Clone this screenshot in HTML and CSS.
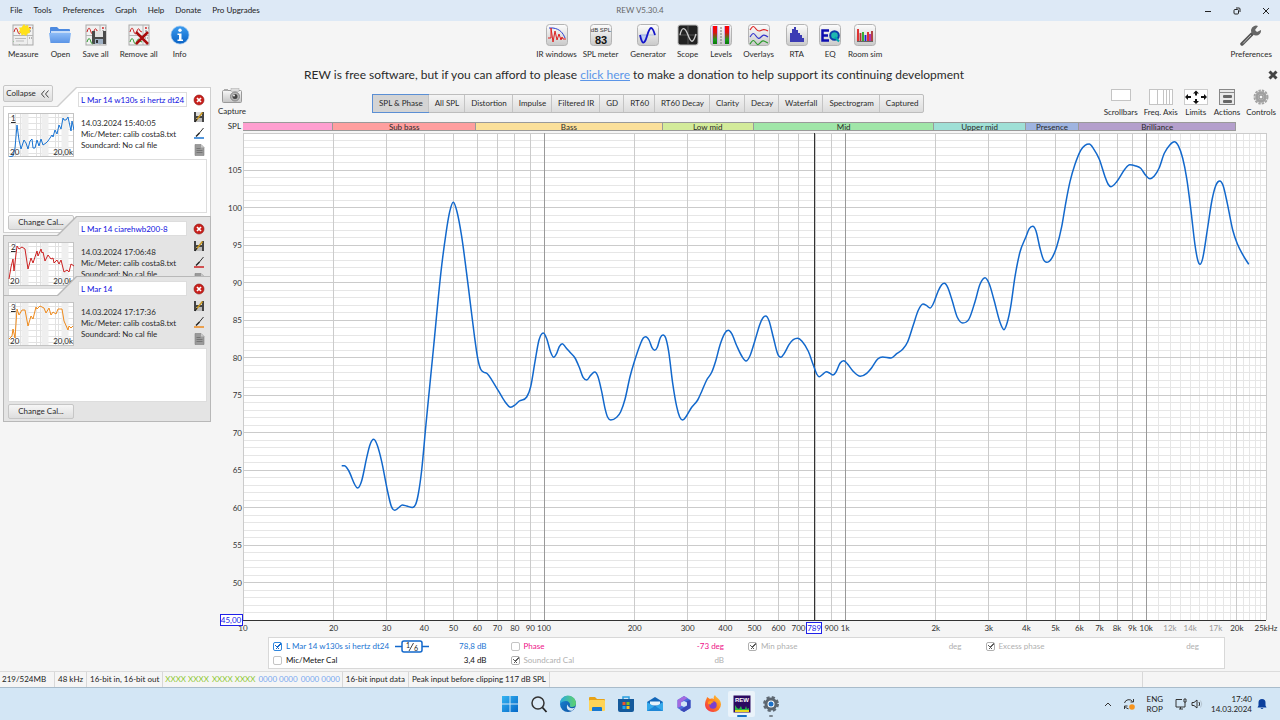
FILE: index.html
```html
<!DOCTYPE html>
<html lang="en">
<head>
<meta charset="utf-8">
<title>REW V5.30.4</title>
<link rel="stylesheet" href="styles.css">
</head>
<body>
<svg class="defs" aria-hidden="true">
  <defs>
    <linearGradient id="g-tile" x1="0" y1="0" x2="0" y2="1"><stop offset="0" stop-color="#fdfdfd"/><stop offset="1" stop-color="#c9c9c9"/></linearGradient>
    <linearGradient id="g-folder" x1="0" y1="0" x2="0" y2="1"><stop offset="0" stop-color="#8dbcf7"/><stop offset="1" stop-color="#5a94e6"/></linearGradient>
    <linearGradient id="g-info" x1="0" y1="0" x2="0" y2="1"><stop offset="0" stop-color="#3b9cf0"/><stop offset="1" stop-color="#0a62c4"/></linearGradient>
    <linearGradient id="g-level" x1="0" y1="0" x2="0" y2="1"><stop offset="0" stop-color="#f00"/><stop offset=".35" stop-color="#e01010"/><stop offset=".75" stop-color="#1a9a1a"/><stop offset="1" stop-color="#0a7a0a"/></linearGradient>
    <linearGradient id="g-edge" x1="0" y1="0" x2="1" y2="1"><stop offset="0" stop-color="#1b87d6"/><stop offset="1" stop-color="#0b4fa0"/></linearGradient>
    <linearGradient id="g-edge2" x1="0" y1="0" x2="1" y2="0"><stop offset="0" stop-color="#2ba9e0"/><stop offset="1" stop-color="#5fd36a"/></linearGradient>
    <linearGradient id="g-win" x1="0" y1="0" x2="1" y2="1"><stop offset="0" stop-color="#35b4f2"/><stop offset="1" stop-color="#0568c8"/></linearGradient>
    <linearGradient id="g-fox" x1="1" y1="0" x2="0" y2="1"><stop offset="0" stop-color="#ffd43a"/><stop offset=".5" stop-color="#ff7a1c"/><stop offset="1" stop-color="#f0235a"/></linearGradient>
    <linearGradient id="g-cam" x1="0" y1="0" x2="0" y2="1"><stop offset="0" stop-color="#f8f8f8"/><stop offset="1" stop-color="#c4c4c4"/></linearGradient>
    <symbol id="doc" viewBox="0 0 22 22">
      <rect x="1" y="1" width="20" height="20" fill="#f1f1f1" stroke="#a9a9a9"/>
      <path d="M1 11.500h20M15 1v20" stroke="#b5b5b5"/>
      <path d="M2 8c2-7 3-3 4 0s2 2 3-1 2-3 3 0l2 1" fill="none" stroke="#c22"/>
      <path d="M2 18c2-6 3-3 4 0s2 2 3-1 2-2 3 0l2 1" fill="none" stroke="#2a9a2a"/>
      <path d="M17 4h1M20 4h1M17 7h2M17 14h1M19 14h1" stroke="#777"/><circle cx="18" cy="4" r="1" fill="#d33"/>
    </symbol>
    <symbol id="tile" viewBox="0 0 22 22"><rect x=".5" y=".5" width="21" height="21" rx="3" fill="url(#g-tile)" stroke="#b4b4b4"/></symbol>
    <symbol id="remove" viewBox="0 0 12 12"><circle cx="6" cy="6" r="5" fill="#c9201c" stroke="#8f1512" stroke-width=".6"/><path d="M4 4l4 4M8 4l-4 4" stroke="#fff" stroke-width="1.700"/></symbol>
    <symbol id="save" viewBox="0 0 12 12"><path d="M1 1h2v4h6V1h2v10H1z" fill="#444"/><rect x="3" y="1" width="6" height="4" fill="#ddd"/><rect x="3" y="7" width="6" height="4" fill="#bbb"/><path d="M3 9.500l6.500-8" stroke="#c9981f" stroke-width="1.500"/><path d="M2 11l2-3" stroke="#222" stroke-width="1.200"/></symbol>
    <symbol id="note" viewBox="0 0 12 12"><path d="M2 .5h6l3 3v8H2z" fill="#9a9a9a" stroke="#808080" stroke-width=".6"/><path d="M3.500 4.500h4M3.500 6.500h6M3.500 8.500h6" stroke="#6c6c6c" stroke-width=".8"/><path d="M8 .5v3h3z" fill="#c9c9c9"/></symbol>
    <symbol id="pen" viewBox="0 0 12 12"><path d="M10.500 1L6 6.500" stroke="#333" stroke-width="1"/><path d="M6.500 6L3 9.500" stroke="#222" stroke-width="1.500"/><path d="M1 11h10" stroke="currentColor" stroke-width="1.500"/></symbol>
    <symbol id="mini-grid" viewBox="0 0 66 44">
      <rect x=".5" y=".5" width="65" height="43" fill="#fff" stroke="#c4c4c4"/>
      <path d="M1 4.500h64M1 10.500h64M1 16.500h64M1 22.500h64M1 28.500h64M1 34.500h64M1 40.500h64M7.500 1v42M12.500 1v42M28.500 1v42M32.500 1v42M47.500 1v42M50.500 1v42" stroke="#e2e2e2" fill="none"/>
      <path d="M17 1v42M37 1v42M57 1v42" stroke="#efefef" stroke-width="7"/>
    </symbol>
    <symbol id="chevrons" viewBox="0 0 10 10"><path d="M4.500 1.500L1.500 5l3 3.500M8.500 1.500L5.500 5l3 3.500" fill="none" stroke="#444"/></symbol>
  </defs>
</svg>

<header class="titlebar">
  <nav class="menu">
    <button>File</button><button>Tools</button><button>Preferences</button><button>Graph</button><button>Help</button><button>Donate</button><button>Pro Upgrades</button>
  </nav>
  <h1 class="title">REW V5.30.4</h1>
  <div class="controls">
    <button aria-label="Minimise"><svg viewBox="0 0 8 8"><path d="M1 4.500h6"/></svg></button>
    <button aria-label="Restore"><svg viewBox="0 0 8 8"><rect x="1" y="2.500" width="4.500" height="4.500" rx="1"/><path d="M3 1h3q1 0 1 1v3"/></svg></button>
    <button aria-label="Close"><svg viewBox="0 0 8 8"><path d="M1 1l6 6M7 1L1 7"/></svg></button>
  </div>
</header>

<div class="toolbar">
  <div class="tools tools-file">
    <button><svg viewBox="0 0 22 22"><use href="#doc"/><rect x="2" y="12" width="13" height="8" fill="#eee"/><path d="M3 14.500h11M4 17h8" stroke="#bbb"/><path d="M12 0l1.500 2 2.500-1 .5 2.500L19 4.500 17.500 6.500 18 9l-2.500.5L14 12l-2-1.500-2.500 1L9 9 6.500 8 8 6 7 3.500 9.500 3.500z" fill="#ffe11a"/></svg>Measure</button>
    <button><svg viewBox="0 0 22 22"><path d="M1 4q0-1 1-1h6l2 2h10q1 0 1 1v8H1z" fill="#4d8ae0"/><path d="M2 7h19v4H2z" fill="#c6dcf8"/><path d="M0 9h22l-1.500 10H1.500z" fill="url(#g-folder)"/></svg>Open</button>
    <button><svg viewBox="0 0 22 22"><use href="#doc"/><path d="M7 7h14v13H8l-1-1z" fill="#4a4a4a"/><rect x="10" y="7" width="8" height="6" fill="#e3e3e3"/><rect x="10" y="15" width="8" height="5" fill="#9fb0c4"/><rect x="11" y="16" width="2" height="3" fill="#333"/></svg>Save all</button>
    <button><svg viewBox="0 0 22 22"><use href="#doc"/><path d="M8 8l12 12M20 8L8 20" stroke="#a80d0d" stroke-width="2.500"/></svg>Remove all</button>
    <button><svg viewBox="0 0 22 22"><circle cx="11" cy="11" r="9" fill="url(#g-info)" stroke="#9cc4ee" stroke-width=".7"/><circle cx="11" cy="6.300" r="1.700" fill="#fff"/><path d="M8.500 9.500H12.500V15.500H14V17H8.500V15.500H10V11H8.500z" fill="#fff"/></svg>Info</button>
  </div>
  <div class="tools tools-windows">
    <button><svg viewBox="0 0 22 22"><use href="#tile"/><path d="M3 4h4c7 1 10 5 12 10" fill="none" stroke="#2a3fd0"/><path d="M2 14h3V4l2 14 2-11 2 9 2-6 2 6 1-3 1 2h3" fill="none" stroke="#d22"/></svg>IR windows</button>
    <button><svg viewBox="0 0 22 22"><use href="#tile"/><text x="11" y="8" class="i-db">dB SPL</text><text x="11" y="20" class="i-83">83</text></svg>SPL meter</button>
    <button><svg viewBox="0 0 22 22"><use href="#tile"/><path d="M3 11h16M4 11q3 14 6 3l1-3z" fill="#bfcdf0" stroke="#9fb2e6" stroke-width=".7"/><path d="M3 11c2 9 4 11 7 1s5-11 8-1" fill="none" stroke="#1414c8" stroke-width="1.800"/></svg>Generator</button>
    <button><svg viewBox="0 0 22 22"><rect x=".5" y=".5" width="21" height="21" rx="3" fill="#bbb"/><rect x="1.500" y="1.500" width="19" height="19" rx="2" fill="#222"/><path d="M2 11h18M11 2v18" stroke="#555"/><path d="M3 11c2-9 5-8 8 0s5 9 8-1" fill="none" stroke="#ccc" stroke-width="1.300"/></svg>Scope</button>
    <button><svg viewBox="0 0 22 22"><use href="#tile"/><path d="M3 2h4v18H3zM15 2h4v18h-4z" fill="url(#g-level)"/><path d="M2.500 2v18M7.500 2v18M14.500 2v18M19.500 2v18" stroke="#c9a6e6"/><path d="M10 4h2M10 7h2M10 10h2M10 13h2M10 16h2M10 19h2" stroke="#777"/></svg>Levels</button>
    <button><svg viewBox="0 0 22 22"><use href="#tile"/><g fill="none" stroke-width="1.200"><path d="M2 6c3-5 4-4 6-1s4 2 6 1 3-1 6 1" stroke="#d22"/><path d="M2 13c3-5 4-4 6-1s3 3 5 1 3-3 7 0" stroke="#33c"/><path d="M2 20c3-5 4-4 6-1s3 1 5-1 3-1 7 1" stroke="#2a9a2a"/></g></svg>Overlays</button>
    <button><svg viewBox="0 0 22 22"><use href="#tile"/><path d="M4 18V9h2V5h2V3h2v3h2v3h2v2h2v3h2v4z" fill="#3c3cb4"/></svg>RTA</button>
    <button><svg viewBox="0 0 22 22"><use href="#tile"/><path d="M10 6.500H3.500v10H10M3 11.500h6" fill="none" stroke="#0c0cb0" stroke-width="2.500"/><circle cx="15.500" cy="11.500" r="4.300" fill="#1fb8b0" stroke="#0c3ca8" stroke-width="2"/><path d="M16 13l4 4.500" stroke="#0aa" stroke-width="2"/></svg>EQ</button>
    <button><svg viewBox="0 0 22 22"><use href="#tile"/><path d="M4 17V5M14 17V8" stroke="#d22" stroke-width="1.800"/><path d="M6.500 17V9M18 17V7" stroke="#a33" stroke-width="1.800"/><path d="M9 17V8" stroke="#2a2" stroke-width="1.800"/><path d="M11.500 17V11" stroke="#22c" stroke-width="1.800"/><path d="M16 17V10" stroke="#a2a" stroke-width="1.800"/><path d="M3 17.500h16" stroke="#666"/></svg>Room sim</button>
  </div>
  <div class="tools">
    <button><svg viewBox="0 0 22 22"><path d="M2 20l10-10" stroke="#555" stroke-width="3.500" stroke-linecap="round"/><path d="M3 19.500l8-8.500" stroke="#bbb" stroke-width="1"/><path d="M18 2a5 5 0 1 0 3 4l-4 2-2-2z" fill="#666"/></svg>Preferences</button>
  </div>
</div>

<div class="notice">
  <p>REW is free software, but if you can afford to please <a href="#">click here</a> to make a donation to help support its continuing development</p>
  <button class="dismiss" aria-label="Dismiss"><svg viewBox="0 0 10 10"><path d="M1.500 1.500l7 7M8.500 1.500l-7 7" stroke="#444" stroke-width="3"/></svg></button>
</div>

<main class="workspace">
  <aside class="sidebar">
    <button class="collapse">Collapse <svg viewBox="0 0 10 10"><use href="#chevrons"/></svg></button>

    <section class="panel selected blue">
      <div class="panel-top">
        <div class="thumb"><svg viewBox="0 0 66 44"><use href="#mini-grid"/><polyline points="1,44 5,43 7,35 9,12 11,27 13,36 16,27 18,30 20,36 22,28 24,26 25,35 27,35 29,27 31,33 33,26 35,32 38,30 40,28 44,22 45,24 47,17 49,21 51,12 53,16 55,5 56,7 58,7 60,4 63,18 64,8 66,17"/></svg><b>1</b><i>20</i><i class="hi">20,0k</i></div>
        <div class="info"><input type="text" aria-label="Measurement 1 name" value="L Mar 14 w130s si hertz dt24"><p>14.03.2024 15:40:05<br>Mic/Meter: calib costa8.txt<br>Soundcard: No cal file</p></div>
        <div class="acts"><button aria-label="Remove"><svg><use href="#remove"/></svg></button><button aria-label="Save"><svg><use href="#save"/></svg></button><button aria-label="Trace colour"><svg><use href="#pen"/></svg></button><button aria-label="Notes"><svg><use href="#note"/></svg></button></div>
      </div>
      <textarea aria-label="Comments for measurement 1"></textarea>
      <button class="cal">Change Cal...</button>
    </section>

    <section class="panel second red">
      <div class="panel-top">
        <div class="thumb"><svg viewBox="0 0 66 44"><use href="#mini-grid"/><polyline points="1,37 3,25 5,17 6,29 9,4 11,7 14,5 17,7 20,27 23,16 25,21 29,9 30,14 33,7 34,11 35,10 37,19 40,13 43,17 45,16 46,21 49,18 51,22 53,18 56,30 59,28 61,30 63,22 66,24"/></svg><b>2</b><i>20</i><i class="hi">20,0k</i></div>
        <div class="info"><input type="text" aria-label="Measurement 2 name" value="L Mar 14 ciarehwb200-8"><p>14.03.2024 17:06:48<br>Mic/Meter: calib costa8.txt<br>Soundcard: No cal file</p></div>
        <div class="acts"><button aria-label="Remove"><svg><use href="#remove"/></svg></button><button aria-label="Save"><svg><use href="#save"/></svg></button><button aria-label="Trace colour"><svg><use href="#pen"/></svg></button><button aria-label="Notes"><svg><use href="#note"/></svg></button></div>
      </div>
      <textarea aria-label="Comments for measurement 2"></textarea>
    </section>

    <section class="panel third orange">
      <div class="panel-top">
        <div class="thumb"><svg viewBox="0 0 66 44"><use href="#mini-grid"/><polyline points="1,37 4,34 5,27 7,36 9,7 11,13 14,8 17,8 20,24 23,14 25,17 28,5 29,7 32,4 36,6 38,11 41,6 43,13 45,10 48,12 50,7 54,7 56,19 60,28 61,24 63,26 65,24"/></svg><b>3</b><i>20</i><i class="hi">20,0k</i></div>
        <div class="info"><input type="text" aria-label="Measurement 3 name" value="L Mar 14"><p>14.03.2024 17:17:36<br>Mic/Meter: calib costa8.txt<br>Soundcard: No cal file</p></div>
        <div class="acts"><button aria-label="Remove"><svg><use href="#remove"/></svg></button><button aria-label="Save"><svg><use href="#save"/></svg></button><button aria-label="Trace colour"><svg><use href="#pen"/></svg></button><button aria-label="Notes"><svg><use href="#note"/></svg></button></div>
      </div>
      <textarea aria-label="Comments for measurement 3"></textarea>
      <button class="cal">Change Cal...</button>
    </section>
  </aside>

  <section class="graph">
    <div class="graph-bar">
      <button class="capture"><svg viewBox="0 0 20 16"><rect x=".5" y="2.500" width="19" height="12" rx="1" fill="url(#g-cam)" stroke="#999"/><rect x="2" y="1" width="4" height="2" fill="#aaa"/><rect x="9" y="0.500" width="8" height="3" fill="#ddd" stroke="#aaa" stroke-width=".5"/><circle cx="13" cy="8.500" r="4.500" fill="#b4b4b4" stroke="#888"/><circle cx="13" cy="8.500" r="2.500" fill="#444"/><circle cx="12" cy="7.500" r="1" fill="#eee"/></svg>Capture</button>
      <div class="tabs">
        <button class="on">SPL &amp; Phase</button><button>All SPL</button><button>Distortion</button><button>Impulse</button><button>Filtered IR</button><button>GD</button><button>RT60</button><button>RT60 Decay</button><button>Clarity</button><button>Decay</button><button>Waterfall</button><button>Spectrogram</button><button>Captured</button>
      </div>
      <div class="view">
        <button><svg viewBox="0 0 24 18"><rect x="2.500" y="1.500" width="19" height="11" fill="#fff" stroke="#c4c4c4"/></svg>Scrollbars</button>
        <button><svg viewBox="0 0 24 18"><rect x=".5" y="1.500" width="23" height="15" fill="#fff" stroke="#c4c4c4"/><path d="M8.500 1v16M14.500 1v16M17.500 1v16M20.500 1v16" stroke="#c4c4c4"/></svg>Freq. Axis</button>
        <button><svg viewBox="0 0 24 18"><rect x=".5" y="1.500" width="23" height="15" fill="#fff" stroke="#ccc"/><path d="M12 2.500l3 3h-2v2h-2v-2H9zM12 16l3-3h-2v-2h-2v2H9zM1 9l3-3v2h3v2H4v2zM23 9l-3-3v2h-3v2h3v2z" fill="#111"/></svg>Limits</button>
        <button><svg viewBox="0 0 24 18"><rect x="4.500" y="1.500" width="15" height="15" fill="#e9e9e9" stroke="#888"/><path d="M4.500 4.500h15" stroke="#888"/><rect x="8" y="7" width="9" height="3" rx="1" fill="#666"/><rect x="8" y="12" width="9" height="3" rx="1" fill="#666"/></svg>Actions</button>
        <button><svg viewBox="0 0 24 18"><circle cx="12" cy="9" r="6.500" fill="none" stroke="#a4a4a4" stroke-width="2" stroke-dasharray="2.400 1.010"/><circle cx="12" cy="9" r="4.200" fill="#ccc" stroke="#a0a0a0" stroke-width="3"/><circle cx="12" cy="9" r="2" fill="#f5f5f5" stroke="#888"/></svg>Controls</button>
      </div>
    </div>

    <div class="chart">
      <span class="unit">SPL</span>
      <div class="bands"><span class="b0"></span><span class="b1">Sub bass</span><span class="b2">Bass</span><span class="b3">Low mid</span><span class="b4">Mid</span><span class="b5">Upper mid</span><span class="b6">Presence</span><span class="b7">Brilliance</span></div>
      <svg class="plot" role="img" aria-label="SPL against frequency">
        <g id="grid"></g>
        <svg viewBox="243 133 1023 487" preserveAspectRatio="none" width="100%" height="100%"><path id="trace" class="trace"/></svg>
        <g id="axis"></g>
      </svg>
    </div>

    <div class="legend">
      <label class="entry c-blue"><input type="checkbox" checked><span>L Mar 14 w130s si hertz dt24</span><svg class="smooth" viewBox="0 0 34 13"><path d="M0 6.500h34" stroke="#1268cc" stroke-width="1.500"/><rect x="7" y="1" width="20" height="11" rx="2" fill="#fff" stroke="#1268cc" stroke-width="1.500"/><text x="11" y="8">1</text><text x="19" y="11">6</text><path d="M14 11l4.500-8" stroke="#444"/></svg><output>78,8 dB</output></label>
      <label class="entry c-pink"><input type="checkbox"><span>Phase</span><output>-73 deg</output></label>
      <label class="entry c-off"><input type="checkbox" checked disabled><span>Min phase</span><output>deg</output></label>
      <label class="entry c-off"><input type="checkbox" checked disabled><span>Excess phase</span><output>deg</output></label>
      <label class="entry"><input type="checkbox"><span>Mic/Meter Cal</span><output>3,4 dB</output></label>
      <label class="entry c-off"><input type="checkbox" checked disabled><span>Soundcard Cal</span><output>dB</output></label>
    </div>
  </section>
</main>

<footer class="status">
  <span class="mem">219/524MB</span><span>48 kHz</span><span>16-bit in, 16-bit out</span><span class="bits"><em>XXXX XXXX</em><em>XXXX XXXX</em><strong>0000 0000</strong><strong>0000 0000</strong></span><span>16-bit input data</span><span>Peak input before clipping 117 dB SPL</span><span class="fill"></span><span class="tail"></span>
</footer>

<nav class="taskbar">
  <div class="apps">
    <button aria-label="Start"><svg viewBox="0 0 18 18"><path d="M1 1h7.500v7.500H1zM9.500 1H17v7.500H9.500zM1 9.500h7.500V17H1zM9.500 9.500H17V17H9.500z" fill="url(#g-win)"/></svg></button>
    <button aria-label="Search"><svg viewBox="0 0 18 18"><circle cx="8" cy="8" r="6" fill="#dbeaf6" stroke="#333" stroke-width="1.500"/><path d="M12.500 12.500L16.500 17" stroke="#222" stroke-width="1.800"/></svg></button>
    <button aria-label="Edge"><svg viewBox="0 0 18 18"><circle cx="9" cy="9" r="8" fill="url(#g-edge)"/><path d="M1 9a8 8 0 0 1 16-1c0 3-2 4-4 4-3 0-2-1-2-2.500S9.500 6 7 6 2 7 1 9z" fill="url(#g-edge2)"/><path d="M16 12.500c-3 1.500-7 .5-7.500-3-2 4 1 7 5 6z" fill="#d3e6f5"/></svg></button>
    <button aria-label="File Explorer"><svg viewBox="0 0 18 18"><path d="M1 3q0-1 1-1h5l2 2h7q1 0 1 1v4H1z" fill="#e8a317"/><rect x="1" y="5" width="16" height="11" rx="1" fill="#ffd457"/><path d="M4 16v-3q0-1 1-1h8q1 0 1 1v3z" fill="#1878d0"/></svg></button>
    <button aria-label="Store"><svg viewBox="0 0 18 18"><path d="M6 5V2h6v3" fill="none" stroke="#2a9fe0" stroke-width="1.500"/><path d="M1 4h16v11q0 2-2 2H3q-2 0-2-2z" fill="#145a9c"/><path d="M5.500 7h3v3h-3z" fill="#f0532a"/><path d="M9.500 7h3v3h-3z" fill="#80c020"/><path d="M5.500 11h3v3h-3z" fill="#20a8f0"/><path d="M9.500 11h3v3h-3z" fill="#ffc020"/></svg></button>
    <button aria-label="Mail"><svg viewBox="0 0 18 18"><path d="M1 7l8-5 8 5v9H1z" fill="#1266b8"/><path d="M4 6.500h10v4H4z" fill="#e6f2fb"/><path d="M1 7l8 5 8-5v9H1z" fill="#35a8ea"/><path d="M1 16l8-5 8 5z" fill="#1e86d6"/></svg></button>
    <button aria-label="Microsoft 365"><svg viewBox="0 0 18 18"><path d="M9 1l6.500 4v8L9 17l-6.500-4V5z" fill="#4b6fdc"/><path d="M9 1L2.500 5v8l4-2V7l6-4z" fill="#a46be0"/><path d="M15.500 5v8L9 17l-4-2 6.500-4V6z" fill="#3b49b8"/><path d="M9 6l3 1.500v3L9 12l-3-1.500v-3z" fill="#d3e6f5"/></svg></button>
    <button aria-label="Firefox"><svg viewBox="0 0 18 18"><path d="M2 5c1-2 1-3 1-3l3 2c2-1 4 0 4 0-1-2 1-4 1-4 1 3 6 4 6 9.500A7.700 7.700 0 0 1 9 17C4 17 1 13 1 9.500 1 7 2 5 2 5z" fill="url(#g-fox)"/><circle cx="9" cy="10" r="3.700" fill="#7a3fd0"/><path d="M4 7c2-2 4-1 6 0-2 1-3 1-3 2.500L4 9z" fill="#ff9a1c"/></svg></button>
    <button class="active" aria-label="REW"><svg viewBox="0 0 18 18"><rect x=".5" y=".5" width="17" height="17" fill="#2c0a60"/><text x="9" y="7" class="i-rew">REW</text><path d="M2 17V10l2 3 2 1 2-3 1 3h3l1-3 1 3 2-1v4z" fill="#28b848"/><path d="M2 17v-2h14v2z" fill="#e8d820"/></svg></button>
    <button class="running" aria-label="Settings"><svg viewBox="0 0 18 18"><circle cx="9" cy="9" r="6.500" fill="none" stroke="#606a74" stroke-width="3" stroke-dasharray="3 2.100"/><circle cx="9" cy="9" r="5" fill="#fff" stroke="#5c666f" stroke-width="3"/><circle cx="9" cy="9" r="2.500" fill="#1a70c8"/></svg></button>
  </div>
  <div class="tray">
    <button aria-label="Hidden icons"><svg viewBox="0 0 12 12"><path d="M3 8l3-3 3 3"/></svg></button>
    <button aria-label="Update"><svg viewBox="0 0 12 12"><path d="M1.500 5a4.500 4.500 0 0 1 8-1.500M10.500 1v3h-3M1.500 11V8h3M2 8.500q1 2 3.500 2.300"/><circle cx="9" cy="9" r="2.800" fill="#f7941d" stroke="none"/></svg></button>
    <span class="lang">ENG<br>ROP</span>
    <button class="net" aria-label="Network"><svg viewBox="0 0 12 12"><path d="M7 1.500H1v7.500h9V6M4 11h4M5.500 9v2M9 1h2v3H9zM10 4v2"/></svg></button>
    <button aria-label="Volume"><svg viewBox="0 0 12 12"><path d="M1 4.500h2L6 2v8L3 7.500H1zM8 4q1.300 2 0 4"/><path d="M9.500 2.500q2.500 3.500 0 7" stroke="#b5c4d0"/></svg></button>
    <time>17:40<br>14.03.2024</time>
    <button class="bell" aria-label="Notifications"><svg viewBox="0 0 12 12"><path d="M6 1a3.500 3.500 0 0 1 3.500 3.500V7.500l1 2h-9l1-2V4.500A3.500 3.500 0 0 1 6 1zM4.500 10h3q-1.500 2-3 0z" fill="#0b3f9c" stroke="none"/></svg></button>
  </div>
</nav>
<script src="chart.js"></script>
</body>
</html>
```
FILE: styles.css
```css
* { box-sizing: border-box; }
body {
  margin: 0;
  min-height: 100vh;
  display: flex;
  flex-direction: column;
  background: #f5f5f5;
  color: #2a2a2a;
  font: 8px/11px Lato, "Open Sans", sans-serif;
}
button, input, textarea { font: inherit; color: inherit; margin: 0; }
button { background: none; border: 0; padding: 0; white-space: nowrap; }
p { margin: 0; }
svg { display: block; flex: none; }
.defs { position: absolute; width: 0; height: 0; }

.titlebar {
  display: grid;
  grid-template-columns: 1fr auto 1fr;
  align-items: center;
  height: 21px;
  padding: 0 10px;
  background: #dde9f6;
}
.menu { display: flex; gap: 11px; color: #222; }
.title { margin: 0; font-size: 8px; font-weight: 400; color: #666; }
.controls { display: flex; justify-content: flex-end; gap: 21px; }
.controls svg { width: 8px; height: 8px; fill: none; stroke: #222; }

.toolbar {
  display: flex;
  justify-content: space-between;
  height: 41px;
  padding: 3px 8px 0 8px;
}
.tools { display: flex; gap: 11px; }
.tools button { display: flex; flex-direction: column; align-items: center; gap: 3px; }
.tools svg { width: 22px; height: 22px; }
.tools-windows {
  display: grid;
  gap: 0;
  grid-template-columns: 44px 44px 51px 28px 39px 36px 40px 27px 43px;
}
.i-db { font: 6px "Liberation Sans", sans-serif; text-anchor: middle; fill: #333; }
.i-83 { font: bold 11px "Liberation Sans", sans-serif; text-anchor: middle; fill: #111; }

.notice { display: flex; align-items: center; height: 25px; padding: 0 2px 0 0; }
.notice p { flex: 1; text-align: center; font-size: 12px; line-height: 16px; }
.notice a { color: #5b95e8; }
.dismiss svg { width: 10px; height: 10px; }

.workspace { flex: 1; display: grid; grid-template-columns: 208px 1fr; padding-left: 3px; }

.sidebar { display: flex; flex-direction: column; align-items: stretch; margin-top: -2px; }
.collapse, .cal {
  display: flex;
  align-items: center;
  justify-content: center;
  gap: 4px;
  border: 1px solid #c6c6c6;
  border-radius: 2px;
  background: linear-gradient(#f6f6f6, #dedede);
}
.collapse { align-self: flex-start; width: 50px; height: 17px; }
.collapse svg { width: 10px; height: 10px; }

.panel {
  --edge: #b8b8b8;
  --face: #e4e4e4;
  position: relative;
  display: flex;
  flex-direction: column;
  gap: 2px;
  height: 146px;
  padding: 5px 4px 3px 5px;
  background: var(--edge);
  clip-path: polygon(0 19px, 54px 19px, 73px 0, 100% 0, 100% 100%, 0 100%);
}
.panel::before {
  content: "";
  position: absolute;
  inset: 1px;
  background: var(--face);
  clip-path: polygon(0 19px, 54px 19px, 73px 0, 100% 0, 100% 100%, 0 100%);
}
.panel > * { position: relative; }
.selected { --edge: #cfcfcf; --face: #fff; margin-top: -15px; }
.second { margin-top: -17px; }
.third { margin-top: -86px; }
.blue { --trace: #1a74d2; }
.red { --trace: #cc2222; }
.orange { --trace: #ee8a1c; }
.panel-top { display: grid; grid-template-columns: 66px 109px 1fr; gap: 4px; height: 65px; }
.thumb { align-self: end; display: grid; grid-template-columns: 1fr auto; align-content: space-between; height: 44px; padding: 0 1px 0 2px; position: relative; line-height: 9px; }
.thumb svg { position: absolute; inset: 0; width: 66px; height: 44px; }
.thumb polyline { fill: none; stroke: var(--trace); stroke-width: 1; }
.thumb b, .thumb i { position: relative; font-weight: 400; font-style: normal; }
.thumb b { grid-column: 1 / 3; text-decoration: underline; margin: 1px 0 0 1px; }
.info input { display: block; width: 100%; height: 15px; padding: 0 0 0 2px; border: 1px solid #ddd; background: #fff; color: #1010e0; }
.info p { padding: 11px 0 0 3px; white-space: nowrap; }
.acts { display: flex; flex-direction: column; align-items: center; justify-content: space-between; padding: 2px 0 1px; }
.acts svg { width: 12px; height: 12px; color: var(--trace); }
.panel textarea { display: block; width: 199px; height: 54px; resize: none; border: 1px solid #ddd; background: #fff; }
.cal { width: 66px; height: 15px; }

.graph { display: flex; flex-direction: column; }
.graph-bar { display: flex; align-items: flex-start; height: 32px; padding: 1px 4px 0 7px; }
.capture, .view button { display: flex; flex-direction: column; align-items: center; }
.capture { width: 28px; gap: 2px; }
.capture svg { width: 20px; height: 16px; }
.tabs { display: flex; margin: 6px 0 0 126px; border: 1px solid #bdbdbd; border-radius: 2px; background: linear-gradient(#f4f4f4, #dcdcdc); }
.tabs button { height: 17px; padding: 0 5px 0 6px; border-left: 1px solid #c4c4c4; }
.tabs button:first-child { border: 0; }
.tabs .on { background: #d4d4d4; outline: 1px solid #5b8fd4; }
.view { display: flex; gap: 6px; margin-left: auto; }
.view button { gap: 1px; }
.view svg { width: 24px; height: 18px; }

.chart { flex: 1; display: grid; grid-template-columns: 1fr; grid-template-rows: 9px 1fr; row-gap: 2px; padding: 3px 14px 17px 32px; position: relative; }
.unit { position: absolute; left: 0; top: 2px; width: 30px; text-align: right; }
.bands { display: flex; padding-right: 30px; line-height: 8px; text-align: center; }
.bands span { border: 1px solid #9a9a9a; border-left-width: 0; white-space: nowrap; flex-basis: 0; }
.b0 { flex-grow: 90; background: #ff9fd0; }
.b1 { flex-grow: 143; background: #ff9f9f; }
.b2 { flex-grow: 187; background: #fbe09a; }
.b3 { flex-grow: 91; background: #d3eb9a; }
.b4 { flex-grow: 181; background: #a0e6a8; }
.b5 { flex-grow: 91; background: #9fe0d6; }
.b6 { flex-grow: 53; background: #9fb4e0; }
.b7 { flex-grow: 157; background: #b49fcc; }
.plot { width: 100%; height: 100%; overflow: visible; background: #fff; }
.plot line { stroke: #e6e6e6; shape-rendering: crispEdges; }
.plot .major { stroke: #cbcbcb; }
.plot .decade { stroke: #999; }
.plot .cursor, .plot .base { stroke: #333; }
.plot text { fill: #333; text-anchor: middle; }
.plot .end { text-anchor: end; }
.plot .faint { fill: #999; }
.plot .marker { fill: #2020e8; }
.plot .box { fill: #fff; stroke: #2020e8; shape-rendering: crispEdges; }
.trace { fill: none; stroke: #1268cc; stroke-width: 1.5px; vector-effect: non-scaling-stroke; }

.legend {
  display: grid;
  grid-template-columns: repeat(4, 1fr);
  column-gap: 24px;
  grid-auto-rows: 14px;
  height: 32px;
  margin: 0 55px 2px 57px;
  padding: 1px 25px 0 4px;
  border: 1px solid #d8d8d8;
  background: #fff;
  color: #111;
}
.entry { display: flex; align-items: center; gap: 4px; white-space: nowrap; }
.entry output { margin-left: auto; }
.entry input { appearance: none; width: 9px; height: 9px; border: 1px solid #c4c4c4; border-radius: 2px; background: #fff; }
.entry input:checked {
  border-color: #2f86dd;
  background: linear-gradient(45deg, transparent 36%, #1268cc 36% 48%, transparent 48%) 1px 1px / 4px 5px no-repeat,
    linear-gradient(-50deg, transparent 42%, #1268cc 42% 56%, transparent 56%) 2px 0 / 5px 6px no-repeat, #fff;
}
.entry input:disabled { border-color: #b0b0b0; filter: grayscale(1); }
.c-blue { color: #1a74d2; }
.c-pink { color: #ee1289; }
.c-off { color: #b0b0b0; }
.smooth { width: 34px; height: 13px; margin-left: 2px; }
.smooth text { font-size: 7px; fill: #222; }

.status { display: flex; height: 17px; border-top: 1px solid #dcdcdc; border-bottom: 1px solid #a9bccb; line-height: 15px; color: #222; }
.status > span { padding: 0 3px; border-right: 1px solid #d8d8d8; white-space: nowrap; }
.status .mem { width: 55px; padding: 0 2px; }
.status .bits { display: flex; gap: 3px; padding: 0 2px; }
.bits em { font-style: normal; color: #8fc832; }
.bits strong { font-weight: 400; color: #78a8f0; }
.status .fill { flex: 1; }
.status .tail { width: 137px; border: 0; }

.taskbar { display: grid; grid-template-columns: 1fr auto 1fr; align-items: center; height: 32px; background: #d3e6f5; }
.apps { grid-column: 2; display: flex; gap: 2px; }
.apps button { display: grid; place-items: center; position: relative; width: 27px; height: 26px; border-radius: 2px; }
.apps svg { width: 18px; height: 18px; }
.apps .active { background: #eaf3fa; }
.apps .active::after, .apps .running::after { content: ""; position: absolute; bottom: 0; width: 10px; height: 2px; border-radius: 1px; background: #1670c4; }
.apps .running::after { width: 4px; background: #7d8790; }
.i-rew { font: bold 6px "Liberation Sans", sans-serif; text-anchor: middle; fill: #fff; }
.tray { display: flex; justify-content: flex-end; align-items: center; gap: 4px; padding-right: 12px; line-height: 10px; color: #222; }
.tray svg { width: 12px; height: 12px; fill: none; stroke: #333; }
.lang { margin: 0 8px; }
.tray time { text-align: right; margin-left: 4px; }
.tray > button:first-child { margin-right: 5px; }
```
FILE: chart.js
```js
const NS = "http://www.w3.org/2000/svg";
const F_MIN = 10, F_MAX = 25000, DB_MIN = 45, DB_MAX = 110;

const fx = f => (Math.log10(f / F_MIN) / Math.log10(F_MAX / F_MIN)) * 100 + "%";
const dy = d => ((DB_MAX - d) / (DB_MAX - DB_MIN)) * 100 + "%";

function add(parent, tag, attrs, text) {
  const el = document.createElementNS(NS, tag);
  for (const k in attrs) el.setAttribute(k, attrs[k]);
  if (text) el.textContent = text;
  parent.appendChild(el);
}

const grid = document.getElementById("grid");
const axis = document.getElementById("axis");
const vline = (f, cls) => add(grid, "line", { x1: fx(f), x2: fx(f), y1: 0, y2: "100%", class: cls });
const hline = (d, cls) => add(grid, "line", { x1: 0, x2: "100%", y1: dy(d), y2: dy(d), class: cls });

for (let d = DB_MIN + 1; d <= DB_MAX; d++) if (d % 5) hline(d, "");
for (let f = 11000; f < F_MAX; f += 1000) vline(f, "");
for (let d = DB_MIN + 5; d <= DB_MAX; d += 5) hline(d, "major");
for (const dec of [10, 100, 1000, 10000]) {
  for (let n = 1; n < 10; n++) {
    if (dec * n <= 20000) vline(dec * n, n === 1 && dec > 10 ? "decade" : "major");
  }
}
vline(F_MAX, "major");
hline(DB_MIN, "base");
vline(789, "cursor");

for (let d = 50; d <= 105; d += 5) add(axis, "text", { x: -1, y: dy(d), dy: 3, class: "end" }, String(d));

const ticks = [[10, "10"], [20, "20"], [30, "30"], [40, "40"], [50, "50"], [60, "60"], [70, "70"], [80, "80"], [90, "90"],
  [100, "100"], [200, "200"], [300, "300"], [400, "400"], [500, "500"], [600, "600"], [700, "700"], [900, "900"],
  [1000, "1k"], [2000, "2k"], [3000, "3k"], [4000, "4k"], [5000, "5k"], [6000, "6k"], [7000, "7k"], [8000, "8k"], [9000, "9k"],
  [10000, "10k"], [12000, "12k"], [14000, "14k"], [17000, "17k"], [20000, "20k"], [25000, "25kHz"]];
for (const [f, label] of ticks) {
  const faint = f > 10000 && f < 20000;
  add(axis, "text", { x: fx(f), y: "100%", dy: 11, class: faint ? "faint" : "" }, label);
}

const floor = document.createElementNS(NS, "svg");
floor.setAttribute("y", "100%");
floor.setAttribute("overflow", "visible");
axis.appendChild(floor);
add(floor, "rect", { x: -23, y: -6, width: 22, height: 11, class: "box" });
add(floor, "text", { x: -12, y: 3, class: "marker" }, "45,00");

const cursor = document.createElementNS(NS, "svg");
cursor.setAttribute("x", fx(789));
cursor.setAttribute("y", "100%");
cursor.setAttribute("overflow", "visible");
axis.appendChild(cursor);
add(cursor, "rect", { x: -8, y: 2, width: 15, height: 11, class: "box" });
add(cursor, "text", { x: 0, y: 11, class: "marker" }, "789");

const pts = [341.7,465.7,344.5,465.7,348.3,470,357.7,488,361.7,480.7,366.7,457.7,370,444.7,373.7,439.3,377.3,445.3,381.7,461.7,387.3,490,391.3,506.3,394.7,510.3,398.7,507.7,402.3,505,406.7,506,412.3,507.5,415.7,504.3,418.3,494,421.7,470,426,424,433.3,350,441,271.7,446,233.3,449.7,211.7,453.3,202.3,457,211.7,461.7,236.7,468.3,286.7,474.3,335,477.7,358.3,480.7,369.3,484,372.3,487.3,373.7,492,380.3,498.3,390.7,505,401.7,510.7,407.3,515,405,519.3,401,526.7,397,530.7,386.7,535,361.7,539,340,543.3,333,546.7,338.7,550.7,352.3,553.7,357.3,556.7,353.3,559.3,346.7,562.3,343.7,566,347.7,570,352.3,575,358,579.3,367.3,583.3,377.7,586.7,380,590.7,375.3,594.7,372,598,376.7,601.7,391.7,605,408.3,607.7,417.3,610.7,420,616.7,417.3,620.7,411.7,625,399.3,630,376.7,634.3,361.7,640.7,343.3,643.3,338,645.7,336.7,649,340,652,347.7,654.7,350.3,657.3,347.3,660.3,337.7,663,335,665.7,338,668.7,351.7,672.7,383.3,676.7,406.7,679.7,417,682.7,420,686,416.7,691.7,407.3,697.7,400,702,390.7,706.7,380,711.7,372.3,715.7,361,720,345,724.7,333.3,728.3,330.3,731.7,333.7,736.7,345.7,741.7,356,746,361,750,355.7,754.3,342.7,760,324,763,317.8,765.7,316,769,320.7,773.3,337.3,777.7,354,781,357.3,784.3,353.3,789,344.7,793.3,339.7,797.7,338.3,802,341.3,808.3,351.3,813.3,365,816.7,374,819.3,376.7,822.7,374.3,826.3,371.7,830,373.3,833,375,836,372,840,363.3,843.7,360.7,847.3,363.7,852.7,370.7,860.3,376.3,866.7,373.3,871.7,367.7,877.7,359,882.7,357,891,358,896.7,353.7,902.7,349.3,907.7,341.7,913.3,325,918.3,310.3,923,304,926.7,305.7,930,308,933.3,303.7,938.3,290.7,941.7,284.7,944.3,283.3,947.7,287.3,952,300,957.3,317.3,962.7,323,969,319,975,301.7,980,284.3,985,277.7,989.3,284,994,300,1000,322.3,1004,329.7,1007.3,322.3,1010.7,306.7,1015,276.7,1020,252,1026,236.7,1029.3,228.7,1032.7,226.3,1036,231,1040,248.3,1043.3,259.3,1046.7,262.3,1051.7,258.3,1056.7,246.7,1061.7,226.7,1065.7,203.3,1070,181.7,1075,164.3,1080.7,150.3,1085,145.3,1089.3,144,1093.3,148.3,1099.3,159.3,1105,176.7,1108,184,1111,186.7,1116.7,181.7,1125,169,1129.7,164.8,1135,165.7,1140.7,168.3,1145.7,175.3,1150,178.7,1154.3,176,1159,168.3,1164.3,153.3,1170,144.7,1174.3,141.7,1178.3,145.7,1182.7,158.3,1186.7,178.3,1190.7,208.3,1195,245,1197.7,260,1200,264.3,1202.7,258.3,1207.3,230,1212,200,1216,185,1219.7,181,1223,185.3,1227.3,203.3,1232.7,230,1237.3,243.7,1243.3,255.7,1248.7,264.3];

// Monotone cubic interpolation: the slope is zero at every peak and dip.
const X = [], Y = [];
for (let i = 0; i < pts.length; i += 2) { X.push(pts[i]); Y.push(pts[i + 1]); }
const n = X.length;
const s = i => (Y[i + 1] - Y[i]) / (X[i + 1] - X[i]);
const m = X.map((_, i) => {
  if (i === 0) return 0;
  if (i === n - 1) return s(n - 2);
  const a = s(i - 1), b = s(i);
  return a * b <= 0 ? 0 : Math.sign(a) * Math.min(Math.abs(a + b) / 2, 3 * Math.abs(a), 3 * Math.abs(b));
});
let path = `M${X[0]} ${Y[0]}`;
for (let i = 0; i < n - 1; i++) {
  const h = (X[i + 1] - X[i]) / 3;
  path += `C${X[i] + h} ${Y[i] + m[i] * h} ${X[i + 1] - h} ${Y[i + 1] - m[i + 1] * h} ${X[i + 1]} ${Y[i + 1]}`;
}
document.getElementById("trace").setAttribute("d", path);
```
